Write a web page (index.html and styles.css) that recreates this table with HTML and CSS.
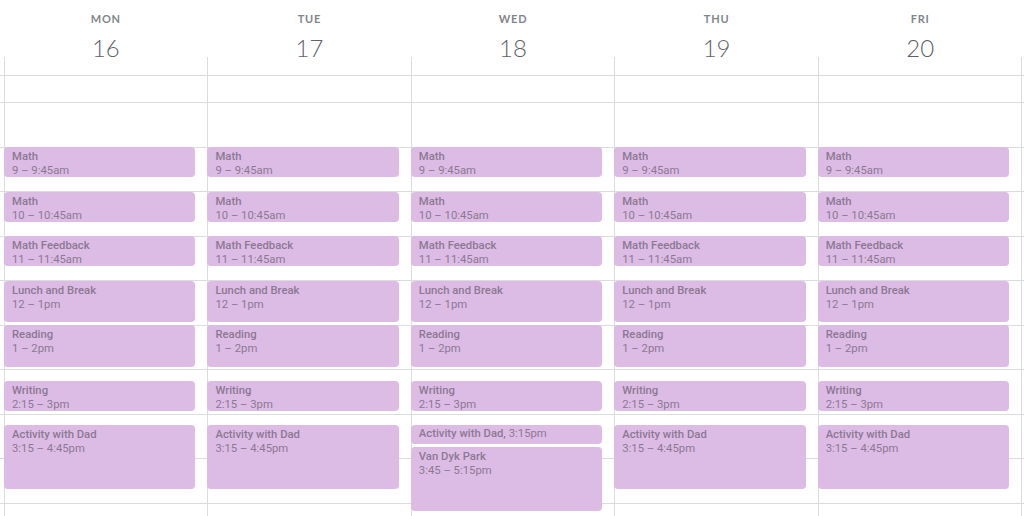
FILE: index.html
```html
<!DOCTYPE html>
<html lang="en">
<head>
<meta charset="utf-8">
<title>Week</title>
<link rel="stylesheet" href="styles.css">
</head>
<body>
<div class="cal">
  <div class="head">
    <div class="dh"><div class="dow">MON</div><div class="num">16</div></div>
    <div class="dh"><div class="dow">TUE</div><div class="num">17</div></div>
    <div class="dh"><div class="dow">WED</div><div class="num">18</div></div>
    <div class="dh"><div class="dow">THU</div><div class="num">19</div></div>
    <div class="dh"><div class="dow">FRI</div><div class="num">20</div></div>
  </div>
  <div class="grid">
    <div class="rows">
      <div class="row allday"></div>
      <div class="row spacer"></div>
      <div class="row hour"></div>
      <div class="row hour"></div>
      <div class="row hour"></div>
      <div class="row hour"></div>
      <div class="row hour"></div>
      <div class="row hour"></div>
      <div class="row hour"></div>
      <div class="row hour"></div>
      <div class="row hour"></div>
      <div class="row hour"></div>
    </div>
    <div class="cols">
      <div class="col">
        <div class="ev" style="top:90px;height:30.4px"><div class="t">Math</div><div class="w">9 – 9:45am</div></div>
        <div class="ev" style="top:134.5px;height:30.4px"><div class="t">Math</div><div class="w">10 – 10:45am</div></div>
        <div class="ev" style="top:179px;height:30.4px"><div class="t">Math Feedback</div><div class="w">11 – 11:45am</div></div>
        <div class="ev" style="top:223.5px;height:41.5px"><div class="t">Lunch and Break</div><div class="w">12 – 1pm</div></div>
        <div class="ev" style="top:268px;height:41.5px"><div class="t">Reading</div><div class="w">1 – 2pm</div></div>
        <div class="ev" style="top:323.6px;height:30.4px"><div class="t">Writing</div><div class="w">2:15 – 3pm</div></div>
        <div class="ev" style="top:368.1px;height:63.75px"><div class="t">Activity with Dad</div><div class="w">3:15 – 4:45pm</div></div>
      </div>
      <div class="col">
        <div class="ev" style="top:90px;height:30.4px"><div class="t">Math</div><div class="w">9 – 9:45am</div></div>
        <div class="ev" style="top:134.5px;height:30.4px"><div class="t">Math</div><div class="w">10 – 10:45am</div></div>
        <div class="ev" style="top:179px;height:30.4px"><div class="t">Math Feedback</div><div class="w">11 – 11:45am</div></div>
        <div class="ev" style="top:223.5px;height:41.5px"><div class="t">Lunch and Break</div><div class="w">12 – 1pm</div></div>
        <div class="ev" style="top:268px;height:41.5px"><div class="t">Reading</div><div class="w">1 – 2pm</div></div>
        <div class="ev" style="top:323.6px;height:30.4px"><div class="t">Writing</div><div class="w">2:15 – 3pm</div></div>
        <div class="ev" style="top:368.1px;height:63.75px"><div class="t">Activity with Dad</div><div class="w">3:15 – 4:45pm</div></div>
      </div>
      <div class="col">
        <div class="ev" style="top:90px;height:30.4px"><div class="t">Math</div><div class="w">9 – 9:45am</div></div>
        <div class="ev" style="top:134.5px;height:30.4px"><div class="t">Math</div><div class="w">10 – 10:45am</div></div>
        <div class="ev" style="top:179px;height:30.4px"><div class="t">Math Feedback</div><div class="w">11 – 11:45am</div></div>
        <div class="ev" style="top:223.5px;height:41.5px"><div class="t">Lunch and Break</div><div class="w">12 – 1pm</div></div>
        <div class="ev" style="top:268px;height:41.5px"><div class="t">Reading</div><div class="w">1 – 2pm</div></div>
        <div class="ev" style="top:323.6px;height:30.4px"><div class="t">Writing</div><div class="w">2:15 – 3pm</div></div>
        <div class="ev short" style="top:368.1px;height:19.25px"><div class="t">Activity with Dad, <span class="w">3:15pm</span></div></div>
        <div class="ev" style="top:390.4px;height:63.75px"><div class="t">Van Dyk Park</div><div class="w">3:45 – 5:15pm</div></div>
      </div>
      <div class="col">
        <div class="ev" style="top:90px;height:30.4px"><div class="t">Math</div><div class="w">9 – 9:45am</div></div>
        <div class="ev" style="top:134.5px;height:30.4px"><div class="t">Math</div><div class="w">10 – 10:45am</div></div>
        <div class="ev" style="top:179px;height:30.4px"><div class="t">Math Feedback</div><div class="w">11 – 11:45am</div></div>
        <div class="ev" style="top:223.5px;height:41.5px"><div class="t">Lunch and Break</div><div class="w">12 – 1pm</div></div>
        <div class="ev" style="top:268px;height:41.5px"><div class="t">Reading</div><div class="w">1 – 2pm</div></div>
        <div class="ev" style="top:323.6px;height:30.4px"><div class="t">Writing</div><div class="w">2:15 – 3pm</div></div>
        <div class="ev" style="top:368.1px;height:63.75px"><div class="t">Activity with Dad</div><div class="w">3:15 – 4:45pm</div></div>
      </div>
      <div class="col">
        <div class="ev" style="top:90px;height:30.4px"><div class="t">Math</div><div class="w">9 – 9:45am</div></div>
        <div class="ev" style="top:134.5px;height:30.4px"><div class="t">Math</div><div class="w">10 – 10:45am</div></div>
        <div class="ev" style="top:179px;height:30.4px"><div class="t">Math Feedback</div><div class="w">11 – 11:45am</div></div>
        <div class="ev" style="top:223.5px;height:41.5px"><div class="t">Lunch and Break</div><div class="w">12 – 1pm</div></div>
        <div class="ev" style="top:268px;height:41.5px"><div class="t">Reading</div><div class="w">1 – 2pm</div></div>
        <div class="ev" style="top:323.6px;height:30.4px"><div class="t">Writing</div><div class="w">2:15 – 3pm</div></div>
        <div class="ev" style="top:368.1px;height:63.75px"><div class="t">Activity with Dad</div><div class="w">3:15 – 4:45pm</div></div>
      </div>
    </div>
  </div>
</div>
</body>
</html>
```

FILE: styles.css
```css
* { box-sizing: border-box; }
html, body { margin: 0; padding: 0; background: #fff; }
body { width: 1024px; height: 516px; overflow: hidden; font-family: Roboto, "Liberation Sans", sans-serif; }

.cal { width: 1024px; }

.head { display: flex; height: 57px; padding: 0 2px 0 4px; }
.dh { flex: 1; display: flex; flex-direction: column; align-items: center; }
.dow {
  font-family: Lato, "Open Sans", sans-serif;
  font-size: 11px; line-height: 12px; font-weight: 700;
  letter-spacing: 0.8px; color: #80868b; padding-top: 13px;
}
.num {
  font-family: Lato, "Open Sans", sans-serif;
  font-size: 24px; line-height: 28px; font-weight: 300;
  color: #5f6368; margin-top: 9px;
}

.grid { position: relative; height: 459px; overflow: hidden; }
.rows { display: flex; flex-direction: column; }
.row { border-bottom: 1px solid #dadce0; flex: none; }
.allday { height: 19px; }
.spacer { height: 27px; }
.hour { height: 44.5px; }

.cols {
  position: absolute; top: 0; bottom: 0; left: 4px; width: 1018px;
  display: flex;
}
.col { flex: 1; position: relative; border-left: 1px solid #dadce0; }
.col:last-child { border-right: 1px solid #dadce0; }

.ev {
  position: absolute; left: -1px; width: calc(100% - 11px);
  background: #dcbce4; border-radius: 4px;
  padding: 3px 7px 0 8px; overflow: hidden;
  color: #8d7894; font-size: 11.3px; line-height: 14px;
}
.ev .t { font-weight: 500; white-space: nowrap; }
.ev .w { font-weight: 400; }
.ev.short { padding-top: 2px; }
```
